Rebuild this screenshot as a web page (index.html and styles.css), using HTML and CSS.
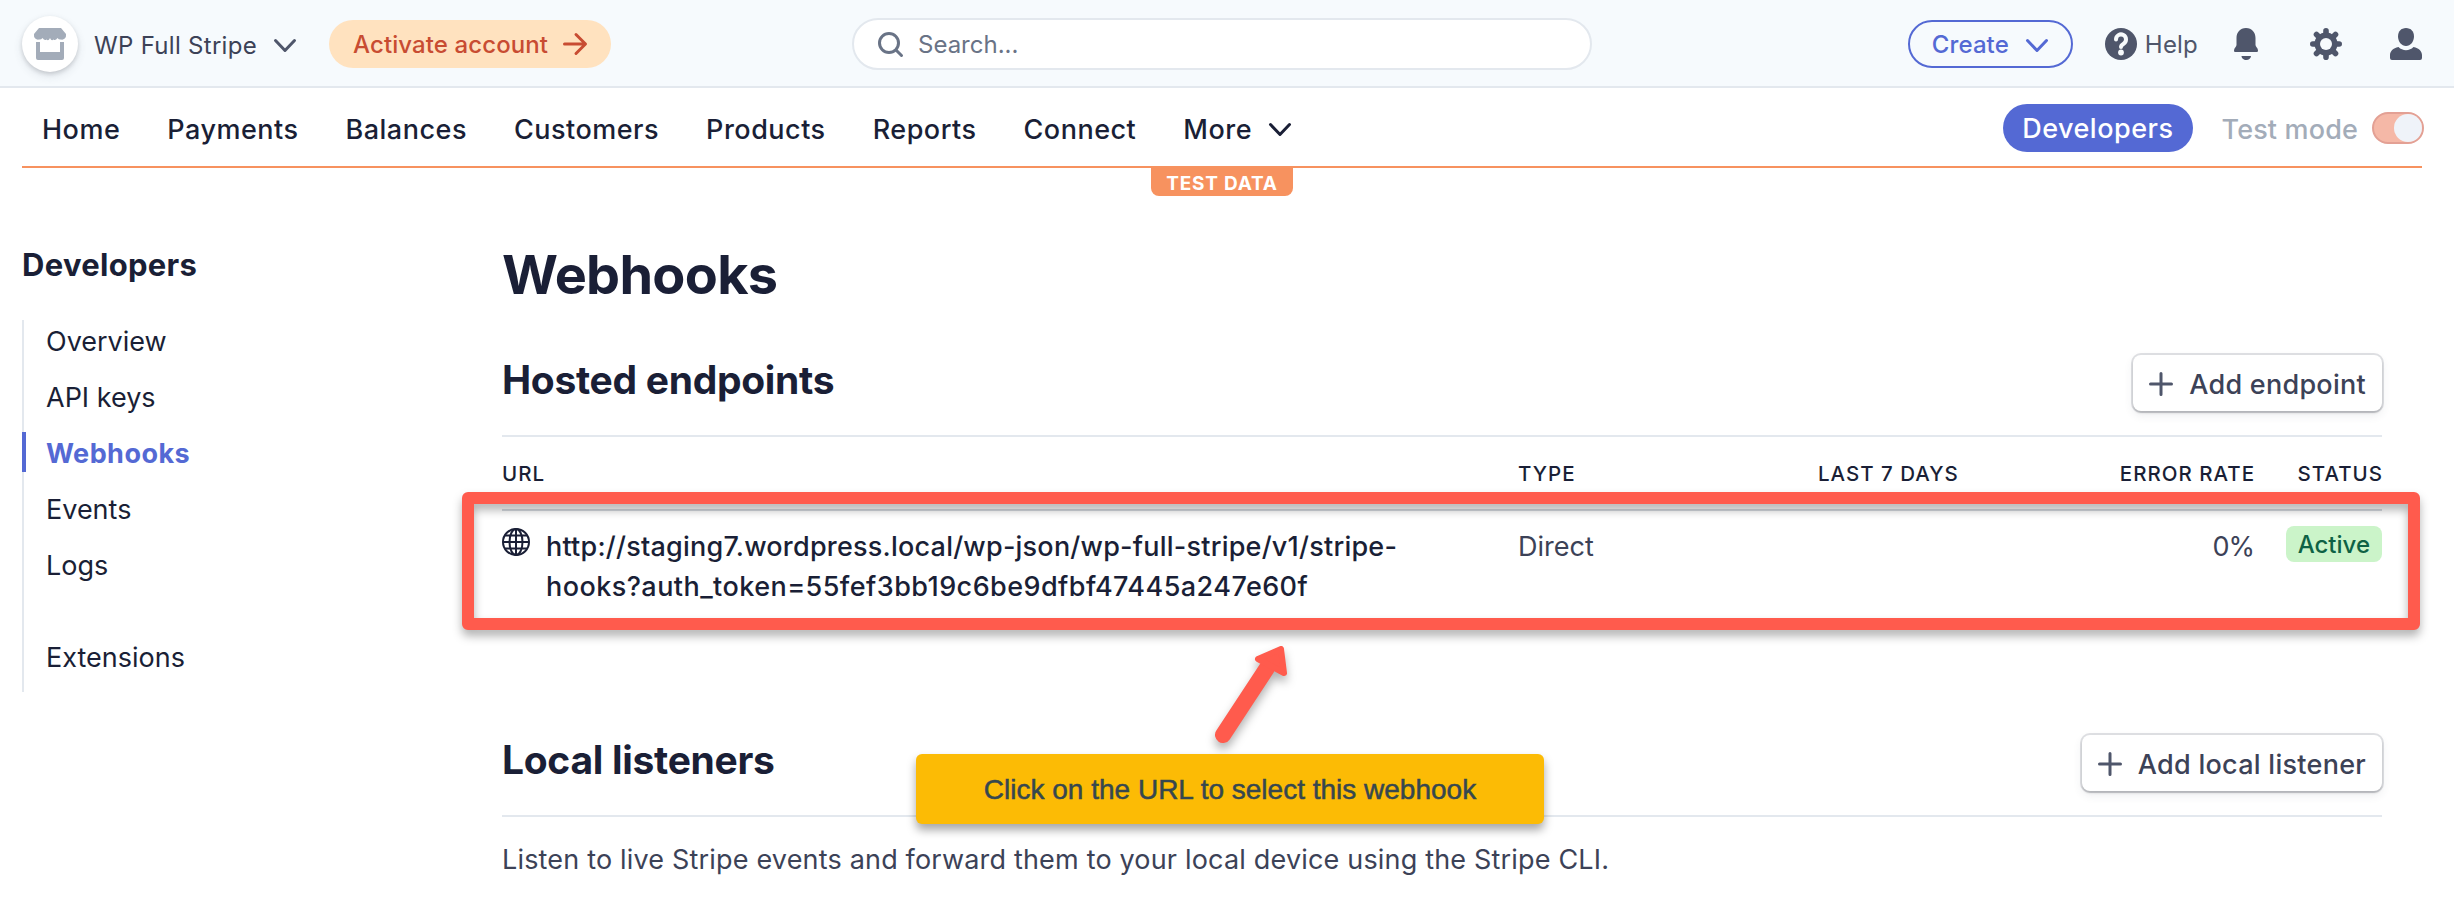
FILE: index.html
```html
<!DOCTYPE html>
<html lang="en">
<head>
    <meta charset="UTF-8">
    <meta name="viewport" content="width=device-width, initial-scale=1.0">
    <title>Webhooks</title>
    <link rel="stylesheet" href="styles.css">
</head>
<body>
    <header class="topbar">
        <div class="topbar-left">
            <div class="avatar">
                <svg width="32" height="32" viewBox="0 0 32 32" fill="#a3acb9">
                    <path d="M5 0h22l5 6v1a4 4 0 0 1-5 4.500q-2 .5-3.500-1.500-2 3-4 1.500-2 2-3.500-1.500-1.500 3.500-3.500 1.500-2 1.500-4-1.500Q7 12 5 11.500A4 4 0 0 1 0 7V6z"/>
                    <path d="M2 14h4v10h20V14h4v16a2 2 0 0 1-2 2H4a2 2 0 0 1-2-2z"/>
                </svg>
            </div>
            <span class="account-name">WP Full Stripe</span>
            <svg class="account-chevron" width="22" height="14" viewBox="0 0 22 14" fill="none" stroke="#4f566b" stroke-width="3" stroke-linecap="round" stroke-linejoin="round"><path d="M1.500 1.500l9.500 10 9.500-10"/></svg>
            <a class="activate">
                <span>Activate account</span>
                <svg width="24" height="22" viewBox="0 0 24 22" fill="none" stroke="#c84c32" stroke-width="3" stroke-linecap="round" stroke-linejoin="round"><path d="M1.500 11h20M13 1.500l9.500 9.500-9.500 9.500"/></svg>
            </a>
        </div>
        <div class="search">
            <svg width="25" height="25" viewBox="0 0 25 25" fill="none" stroke="#697386" stroke-width="3" stroke-linecap="round"><circle cx="11" cy="11" r="9.500"/><path d="M18 18l5.500 5.500"/></svg>
            <span>Search...</span>
        </div>
        <div class="topbar-right">
            <a class="create">
                <span>Create</span>
                <svg width="22" height="14" viewBox="0 0 22 14" fill="none" stroke="#5469d4" stroke-width="3" stroke-linecap="round" stroke-linejoin="round"><path d="M1.500 1.500l9.500 10 9.500-10"/></svg>
            </a>
            <a class="help">
                <svg width="32" height="32" viewBox="0 0 32 32"><circle cx="16" cy="16" r="16" fill="#4f566b"/><path d="M11 11.500a5 5 0 1 1 7.600 4.200c-1.800 1.100-2.600 1.700-2.600 3.300" fill="none" stroke="#f7fafc" stroke-width="4" stroke-linecap="round"/><circle cx="16" cy="24.500" r="2.900" fill="#f7fafc"/></svg>
                <span>Help</span>
            </a>
            <svg class="icon" width="32" height="32" viewBox="0 0 32 32" fill="#4f566b"><path d="M16 0c6 0 9.500 4.500 9.500 10v7c0 2 2.500 3 2.500 5.500 0 1-.6 1.500-1.500 1.500h-21c-.9 0-1.500-.5-1.500-1.500 0-2.500 2.500-3.500 2.500-5.500v-7C6.500 4.500 10 0 16 0zM11.500 28h9.500c0 2-2 4-4.700 4s-4.800-2-4.800-4z"/></svg>
            <svg class="icon" width="32" height="32" viewBox="0 0 32 32">
                <g stroke="#4f566b" stroke-width="5.600" stroke-linecap="round"><path d="M16 2.800v26.400M2.800 16h26.400M6.500 6.500l19 19M25.500 6.500l-19 19"/></g>
                <circle cx="16" cy="16" r="11.500" fill="#4f566b"/><circle cx="16" cy="16" r="6" fill="#f7fafc"/>
            </svg>
            <svg class="icon" width="32" height="32" viewBox="0 0 32 32" fill="#4f566b"><path d="M16 0c5 0 8 3.500 8 8.500S20.500 18 16 18 8 13.500 8 8.500 11 0 16 0z"/><path d="M8.500 19c4 4.200 11 4.200 15 0C29 20 32 23.500 32 27v3a2 2 0 0 1-2 2H2a2 2 0 0 1-2-2v-3c0-3.500 3-7 8.500-8z"/></svg>
        </div>
    </header>

    <nav class="nav">
        <div class="nav-links">
            <a>Home</a>
            <a>Payments</a>
            <a>Balances</a>
            <a>Customers</a>
            <a>Products</a>
            <a>Reports</a>
            <a>Connect</a>
            <a class="nav-more"><span>More</span> <svg width="22" height="14" viewBox="0 0 22 14" fill="none" stroke="#1a1f36" stroke-width="3" stroke-linecap="round" stroke-linejoin="round"><path d="M1.500 1.500l9.500 10 9.500-10"/></svg></a>
        </div>
        <div class="nav-right">
            <a class="developers">Developers</a>
            <span class="test-label">Test mode</span>
            <span class="toggle"><span class="knob"></span></span>
        </div>
        <span class="test-data">TEST DATA</span>
    </nav>

    <div class="layout">
        <aside class="sidebar">
            <h2>Developers</h2>
            <ul class="menu">
                <li>Overview</li>
                <li>API keys</li>
                <li class="active">Webhooks</li>
                <li>Events</li>
                <li>Logs</li>
                <li class="spaced">Extensions</li>
            </ul>
        </aside>

        <main class="content">
            <h1>Webhooks</h1>

            <section class="endpoints">
                <div class="section-head">
                    <h2>Hosted endpoints</h2>
                    <button class="button">
                        <svg width="24" height="24" viewBox="0 0 24 24" stroke="#4f566b" stroke-width="3" stroke-linecap="round"><path d="M12 1.500v21M1.500 12h21"/></svg>
                        <span>Add endpoint</span>
                    </button>
                </div>
                <div class="row row-head">
                    <span>URL</span>
                    <span>TYPE</span>
                    <span>LAST 7 DAYS</span>
                    <span class="right">ERROR RATE</span>
                    <span class="right">STATUS</span>
                </div>
                <div class="row row-body">
                    <div class="url">
                        <svg width="28" height="28" viewBox="0 0 28 28" fill="none" stroke="#1a1f36" stroke-width="2"><circle cx="14" cy="14" r="13"/><ellipse cx="14" cy="14" rx="6.500" ry="13"/><path d="M14 1v26M1 14h26M3 7.500h22M3 20.500h22"/></svg>
                        <span>http://staging7.wordpress.local/wp-json/wp-full-stripe/v1/stripe-<br><span class="url-query">hooks?auth_token=55fef3bb19c6be9dfbf47445a247e60f</span></span>
                    </div>
                    <span>Direct</span>
                    <span></span>
                    <span class="right rate">0%</span>
                    <span class="badge">Active</span>
                </div>
            </section>

            <section class="listeners">
                <div class="section-head">
                    <h2>Local listeners</h2>
                    <button class="button">
                        <svg width="24" height="24" viewBox="0 0 24 24" stroke="#4f566b" stroke-width="3" stroke-linecap="round"><path d="M12 1.500v21M1.500 12h21"/></svg>
                        <span>Add local listener</span>
                    </button>
                </div>
                <p>Listen to live Stripe events and forward them to your local device using the Stripe CLI.</p>
            </section>
        </main>
    </div>

    <!-- annotations over the page -->
    <div class="highlight"></div>
    <svg class="arrow" width="60" height="110" viewBox="0 0 60 110" fill="#ff5b4d" stroke="#ff5b4d" stroke-linecap="round" stroke-linejoin="round">
        <path d="M13 95L57 28" fill="none" stroke-width="16"/>
        <path d="M48 19l23-10 3 24z" stroke-width="6"/>
    </svg>
    <div class="callout">Click on the URL to select this webhook</div>
</body>
</html>
```
FILE: styles.css
```css
* {
    box-sizing: border-box;
}

body {
    position: relative;
    margin: 0;
    height: 912px;
    overflow: hidden;
    background-color: #fff;
    color: #1a1f36;
    font-family: Inter, sans-serif;
    font-size: 27px;
}

svg {
    display: block;
    flex-shrink: 0;
    overflow: visible;
}

h1, h2, p, ul {
    margin: 0;
    padding: 0;
}

.topbar {
    display: grid;
    grid-template-columns: 1fr 740px 1fr;
    align-items: center;
    height: 88px;
    padding: 2px 32px 0 22px;
    background-color: #f6fafd;
    border-bottom: 2px solid #e3e8ee;
    color: #4f566b;
    font-size: 24px;
}

.topbar-left,
.topbar-right {
    display: flex;
    align-items: center;
}

.topbar-right {
    justify-content: flex-end;
}

.avatar {
    display: flex;
    align-items: center;
    justify-content: center;
    width: 56px;
    height: 56px;
    border-radius: 50%;
    background-color: #fff;
    box-shadow: 0 4px 10px rgba(60, 66, 87, 0.12), 0 2px 4px rgba(0, 0, 0, 0.14);
}

.account-name {
    margin-left: 16px;
    padding-top: 3px;
    color: #3c4257;
    letter-spacing: 0.3px;
}

.account-chevron {
    margin-left: 17px;
    margin-top: 4px;
}

.activate {
    display: flex;
    align-items: center;
    gap: 15px;
    height: 48px;
    margin-left: 33px;
    padding: 0 24px;
    border-radius: 24px;
    background-color: #ffe2bf;
    color: #c84c32;
    font-weight: 500;
    letter-spacing: 0.1px;
}

.search {
    display: flex;
    align-items: center;
    gap: 15px;
    height: 52px;
    padding: 0 24px;
    border: 2px solid #e3e8ee;
    border-radius: 26px;
    background-color: #fff;
    color: #697386;
}

.create {
    display: flex;
    align-items: center;
    gap: 17px;
    height: 48px;
    padding: 0 23px 0 22px;
    border: 2px solid #5469d4;
    border-radius: 24px;
    color: #5469d4;
    font-weight: 500;
    letter-spacing: 0.1px;
}

.create svg {
    margin-top: 4px;
}

.help {
    display: flex;
    align-items: center;
    gap: 8px;
    margin-left: 32px;
    margin-right: -16px;
    letter-spacing: 0.2px;
}

.icon {
    margin-left: 48px;
}

.nav {
    position: relative;
    display: flex;
    justify-content: space-between;
    align-items: center;
    height: 80px;
    margin: 0 32px 0 22px;
    padding-top: 2px;
    border-bottom: 2px solid #f7925f;
    font-weight: 500;
    letter-spacing: 0.5px;
}

.nav-links {
    display: flex;
    gap: 47px;
    padding: 2px 0 0 20px;
}

.nav-more {
    display: flex;
    align-items: center;
    gap: 17px;
}

.nav-more svg {
    margin-top: 2px;
}

.nav-right {
    display: flex;
    align-items: center;
    margin-right: -2px;
}

.developers {
    height: 48px;
    padding: 1px 19px 0;
    border-radius: 24px;
    background-color: #5469d4;
    color: #fff;
    line-height: 48px;
    letter-spacing: 0.5px;
}

.test-label {
    margin-left: 29px;
    padding-top: 2px;
    color: #a3acb9;
    letter-spacing: 0.15px;
}

.toggle {
    display: flex;
    justify-content: flex-end;
    width: 52px;
    height: 32px;
    margin-left: 14px;
    border: 2px solid #e3a094;
    border-radius: 16px;
    background-color: #f5b8a7;
}

.knob {
    width: 28px;
    height: 28px;
    border-radius: 50%;
    background-color: #eff3f9;
}

/* hangs from the line under the nav */
.test-data {
    position: absolute;
    top: 78px;
    left: 1129px;
    width: 142px;
    height: 30px;
    border-radius: 0 0 8px 8px;
    background-color: #f7925f;
    color: #fff;
    font-size: 19px;
    font-weight: 700;
    letter-spacing: 0.8px;
    line-height: 35px;
    text-align: center;
}

.layout {
    display: flex;
    padding: 74px 72px 0 22px;
}

.sidebar {
    width: 480px;
    padding-top: 3px;
}

.sidebar h2 {
    font-size: 31px;
    font-weight: 700;
    letter-spacing: 0.3px;
    line-height: 40px;
}

.menu {
    height: 372px;
    margin-top: 35px;
    border-left: 2px solid #e3e8ee;
    list-style: none;
}

.menu li {
    height: 40px;
    margin: 0 0 16px -2px;
    padding: 1px 0 0 24px;
    line-height: 41px;
}

.menu .active {
    padding-left: 20px;
    border-left: 4px solid #5469d4;
    color: #5469d4;
    font-weight: 700;
    letter-spacing: 0.45px;
}

.menu .spaced {
    margin-top: 52px;
}

.content {
    flex: 1;
}

.content h1 {
    font-size: 54px;
    font-weight: 700;
    letter-spacing: -0.7px;
    line-height: 65px;
    height: 64px;
}

.section-head {
    display: flex;
    justify-content: space-between;
    align-items: flex-start;
    height: 82px;
    border-bottom: 2px solid #e3e8ee;
}

.section-head h2 {
    font-size: 39px;
    font-weight: 700;
    letter-spacing: -0.3px;
    line-height: 50px;
}

.button {
    display: flex;
    align-items: center;
    gap: 16px;
    height: 56px;
    padding: 2px 16px 0;
    border: none;
    border-radius: 8px;
    background-color: #fff;
    box-shadow: 0 0 0 2px rgba(60, 66, 87, 0.16), 0 2px 2px rgba(0, 0, 0, 0.16), 0 4px 10px rgba(60, 66, 87, 0.1);
    color: #3c4257;
    font-family: inherit;
    font-size: 27px;
    font-weight: 500;
    letter-spacing: 0.27px;
}

.endpoints {
    margin-top: 49px;
}

.row {
    display: grid;
    grid-template-columns: 1016px 300px 300px 136px 128px;
}

.row-head {
    align-items: center;
    height: 74px;
    padding-top: 1px;
    border-bottom: 2px solid #d3d8de;
    font-size: 20.5px;
    font-weight: 500;
    letter-spacing: 1px;
    white-space: nowrap;
}

.row-head .right {
    margin-right: -1px;
}

.row-body {
    align-items: start;
    height: 111px;
    padding-top: 16px;
    color: #3c4257;
    line-height: 40px;
}

.right {
    text-align: right;
}

.rate {
    letter-spacing: -1px;
}

.url {
    display: flex;
    gap: 16px;
    color: #1a1f36;
    font-weight: 500;
    letter-spacing: 0.22px;
}

.url svg {
    margin-top: 1px;
}

.url-query {
    letter-spacing: 0.44px;
}

.badge {
    justify-self: end;
    height: 36px;
    margin-top: -1px;
    padding: 0 12px;
    border-radius: 8px;
    background-color: #cbf4c9;
    color: #0e6245;
    font-size: 24px;
    font-weight: 500;
    line-height: 37px;
}

.listeners {
    margin-top: 113px;
}

.listeners p {
    margin-top: 23px;
    color: #3c4257;
    letter-spacing: 0.18px;
    line-height: 40px;
}

.highlight {
    position: absolute;
    left: 462px;
    top: 492px;
    width: 1958px;
    height: 138px;
    border: 12px solid #ff5b4d;
    border-radius: 6px;
    filter: drop-shadow(0 6px 5px rgba(0, 0, 0, 0.3));
}

.arrow {
    position: absolute;
    left: 1210px;
    top: 640px;
    filter: drop-shadow(0 6px 5px rgba(0, 0, 0, 0.3));
}

.callout {
    position: absolute;
    left: 916px;
    top: 754px;
    width: 628px;
    height: 70px;
    border-radius: 6px;
    background-color: #fcbb05;
    box-shadow: 0 6px 10px rgba(0, 0, 0, 0.35);
    color: #36474f;
    font-family: "Liberation Sans", Arial, sans-serif;
    font-size: 28px;
    line-height: 71px;
    text-align: center;
    -webkit-text-stroke: 0.5px #36474f;
}
```
